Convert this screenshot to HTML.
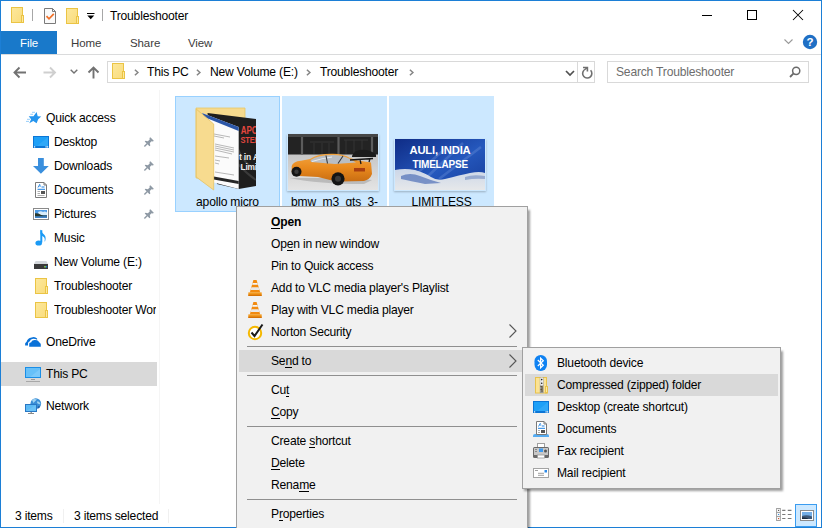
<!DOCTYPE html>
<html><head><meta charset="utf-8">
<style>
*{margin:0;padding:0;box-sizing:border-box}
html,body{width:822px;height:528px;overflow:hidden;background:#fff}
body{position:relative;font-family:"Liberation Sans",sans-serif;font-size:12.1px;color:#000;letter-spacing:-0.2px}
.a{position:absolute}
.t{position:absolute;white-space:nowrap;line-height:14px}
svg{position:absolute;overflow:visible}
u{text-decoration:none;border-bottom:1px solid currentColor;display:inline-block;line-height:11px}
</style></head><body>
<svg width="0" height="0" style="left:0;top:0">
  <defs>
    <linearGradient id="fy" x1="0" y1="0" x2="1" y2="1">
      <stop offset="0" stop-color="#fde89c"/><stop offset="1" stop-color="#f9dc7c"/>
    </linearGradient>
    <symbol id="fold" viewBox="0 0 14 17">
      <rect x="0.5" y="0.5" width="11" height="15" fill="url(#fy)" stroke="#ebc444"/>
      <rect x="10.5" y="8.5" width="2" height="7" fill="#fde9a0" stroke="#ebc444"/>
    </symbol>
  </defs>
</svg>
<!-- window border -->
<div class="a" style="left:0;top:0;width:822px;height:528px;border:1px solid #1c7fd6"></div>

<!-- title bar icons -->
<svg style="left:11px;top:7px" width="14" height="17" viewBox="0 0 14 17"><use href="#fold"/></svg>
<div class="a" style="left:32px;top:9px;width:1px;height:12px;background:#a7a7a7"></div>
<svg style="left:44px;top:8px" width="13" height="16" viewBox="0 0 13 16">
  <path d="M0.5 0.5H8.5L11.5 3.5V15.5H0.5Z" fill="#fafafa" stroke="#7a7a7a"/>
  <path d="M8.5 0.5V3.5H11.5" fill="none" stroke="#7a7a7a"/>
  <path d="M2.5 8.2L5 10.8L9.8 5.8" fill="none" stroke="#f07028" stroke-width="1.7"/>
</svg>
<svg style="left:66px;top:8px" width="14" height="17" viewBox="0 0 14 17"><use href="#fold"/></svg>
<svg style="left:87px;top:13px" width="8" height="7" viewBox="0 0 8 7">
  <path d="M0 0.5H7.5" stroke="#000" stroke-width="1"/>
  <path d="M0.3 2.5H7.2L3.75 6.2Z" fill="#000"/>
</svg>
<div class="a" style="left:102px;top:9px;width:1px;height:12px;background:#a7a7a7"></div>
<div class="t" style="left:110px;top:9px">Troubleshooter</div>
<!-- window controls -->
<div class="a" style="left:702px;top:15px;width:10px;height:1px;background:#000"></div>
<div class="a" style="left:747px;top:10px;width:10px;height:10px;border:1px solid #000"></div>
<svg style="left:793px;top:10px" width="10" height="10" viewBox="0 0 10 10">
  <path d="M0 0L10 10M10 0L0 10" stroke="#000" stroke-width="1.05"/>
</svg>

<!-- ribbon tabs -->
<div class="a" style="left:1px;top:31px;width:56px;height:23px;background:#1979ca"></div>
<div class="t" style="left:20px;top:36px;color:#fff;font-size:11.5px;letter-spacing:-0.1px">File</div>
<div class="t" style="left:71px;top:36px;color:#3c3c3c;font-size:11.5px;letter-spacing:-0.1px">Home</div>
<div class="t" style="left:130px;top:36px;color:#3c3c3c;font-size:11.5px;letter-spacing:-0.1px">Share</div>
<div class="t" style="left:188px;top:36px;color:#3c3c3c;font-size:11.5px;letter-spacing:-0.1px">View</div>
<svg style="left:784px;top:39px" width="9" height="6" viewBox="0 0 9 6">
  <path d="M0.5 0.5L4.5 4.5L8.5 0.5" fill="none" stroke="#9a9a9a" stroke-width="1.1"/>
</svg>
<svg style="left:802px;top:34px" width="16" height="16" viewBox="0 0 16 16">
  <circle cx="8" cy="8" r="7.2" fill="#1f6fc5"/>
  <text x="8" y="12.3" font-family="Liberation Sans" font-weight="bold" font-size="11.5" fill="#fff" text-anchor="middle">?</text>
</svg>
<div class="a" style="left:1px;top:54px;width:820px;height:1px;background:#dadbdc"></div>

<!-- nav buttons -->
<svg style="left:13px;top:66px" width="14" height="13" viewBox="0 0 14 13">
  <path d="M13 6.5H2M6.5 1.5L1.5 6.5L6.5 11.5" fill="none" stroke="#727272" stroke-width="1.9"/>
</svg>
<svg style="left:43px;top:66px" width="14" height="13" viewBox="0 0 14 13">
  <path d="M0.5 6.5H11.5M7 1.5L12 6.5L7 11.5" fill="none" stroke="#cfcfcf" stroke-width="1.9"/>
</svg>
<svg style="left:70px;top:69px" width="8" height="5" viewBox="0 0 8 5">
  <path d="M0.7 0.7L4 4L7.3 0.7" fill="none" stroke="#727272" stroke-width="1.4"/>
</svg>
<svg style="left:87px;top:66px" width="14" height="13" viewBox="0 0 14 13">
  <path d="M6.5 12.5V2M1.5 6.5L6.5 1.5L11.5 6.5" fill="none" stroke="#727272" stroke-width="1.9"/>
</svg>

<!-- address box -->
<div class="a" style="left:107px;top:61px;width:488px;height:22px;border:1px solid #d9d9d9"></div>
<div class="a" style="left:577px;top:62px;width:1px;height:20px;background:#d9d9d9"></div>
<svg style="left:112px;top:63px" width="14" height="17" viewBox="0 0 14 17"><use href="#fold"/></svg>
<svg style="left:134px;top:69px" width="5" height="7" viewBox="0 0 5 7"><path d="M0.9 0.8L3.9 3.5L0.9 6.2" fill="none" stroke="#858585" stroke-width="1.5"/></svg>
<div class="t" style="left:147px;top:65px">This PC</div>
<svg style="left:196px;top:69px" width="5" height="7" viewBox="0 0 5 7"><path d="M0.9 0.8L3.9 3.5L0.9 6.2" fill="none" stroke="#858585" stroke-width="1.5"/></svg>
<div class="t" style="left:210px;top:65px">New Volume (E:)</div>
<svg style="left:306px;top:69px" width="5" height="7" viewBox="0 0 5 7"><path d="M0.9 0.8L3.9 3.5L0.9 6.2" fill="none" stroke="#858585" stroke-width="1.5"/></svg>
<div class="t" style="left:320px;top:65px">Troubleshooter</div>
<svg style="left:409px;top:69px" width="5" height="7" viewBox="0 0 5 7"><path d="M0.9 0.8L3.9 3.5L0.9 6.2" fill="none" stroke="#858585" stroke-width="1.5"/></svg>
<svg style="left:565px;top:70px" width="10" height="7" viewBox="0 0 10 7">
  <path d="M1 1L5 5L9 1" fill="none" stroke="#505050" stroke-width="1.7"/>
</svg>
<svg style="left:578px;top:63px" width="18" height="18" viewBox="0 0 18 18">
  <path d="M12.6 7.3A4.6 4.6 0 1 1 6.2 7" fill="none" stroke="#6f6f6f" stroke-width="1.6"/>
  <path d="M6.2 7L9.2 4.6" fill="none" stroke="#6f6f6f" stroke-width="1.4"/>
  <path d="M5 4.5H9.4V8.6" fill="none" stroke="#6f6f6f" stroke-width="1.6"/>
</svg>

<!-- search box -->
<div class="a" style="left:607px;top:61px;width:202px;height:22px;border:1px solid #d9d9d9"></div>
<div class="t" style="left:616px;top:65px;color:#6d6d6d">Search Troubleshooter</div>
<svg style="left:789px;top:66px" width="12" height="12" viewBox="0 0 12 12">
  <circle cx="7.2" cy="4.8" r="3.6" fill="none" stroke="#6a6a6a" stroke-width="1.5"/>
  <path d="M4.6 7.4L1 11" stroke="#6a6a6a" stroke-width="1.8"/>
</svg>

<!-- nav pane -->
<div class="a" style="left:159px;top:90px;width:1px;height:414px;background:#f5f5f5"></div>
<div class="a" style="left:1px;top:362px;width:156px;height:24px;background:#d9d9d9"></div>

<svg style="left:22px;top:106px" width="24" height="22" viewBox="0 0 24 22">
  <path d="M14.6 6L15.7 10.3L19.2 10.4L16.2 13.3L14.6 17.2L11.3 14.9L7.3 17.2L9.1 13.3L6.7 10.2L11.5 10.3Z" fill="#2595ee"/>
  <path d="M10 6.3H13M8.3 8.3H11M5 13.3H8M4 15.4H7" stroke="#8ccaf8" stroke-width="0.9"/>
</svg>
<div class="t" style="left:46px;top:111px">Quick access</div>

<svg style="left:33px;top:136px" width="16" height="12" viewBox="0 0 16 12">
  <rect x="0" y="0" width="16" height="12" fill="#0b76d6"/>
  <rect x="1" y="1" width="14" height="9" fill="#1ea0f7"/>
  <path d="M4 10L15 1V10Z" fill="#3aaef8" opacity="0.6"/>
  <rect x="1" y="10.3" width="1.2" height="1.2" fill="#fff"/>
  <rect x="12.5" y="10.3" width="1.2" height="1.2" fill="#fff"/>
  <rect x="14" y="10.3" width="1.2" height="1.2" fill="#fff"/>
</svg>
<div class="t" style="left:54px;top:135px">Desktop</div>

<svg style="left:33px;top:158px" width="16" height="16" viewBox="0 0 16 16">
  <path d="M5 0H10.8V8H15.8L7.9 15.8L0 8H5Z" fill="#3a8fdd"/>
</svg>
<div class="t" style="left:54px;top:159px">Downloads</div>

<svg style="left:35px;top:182px" width="13" height="16" viewBox="0 0 13 16">
  <path d="M0.5 0.5H9L11.5 3V15.5H0.5Z" fill="#fff" stroke="#7a7a7a"/>
  <path d="M9 0.5V3H11.5" fill="none" stroke="#7a7a7a"/>
  <path d="M3 5.5L5 2M4.3 4H6" stroke="#1a7fe0" stroke-width="0.9" fill="none"/>
  <path d="M6.5 5H9.5M2.5 7.3H10" stroke="#1a7fe0" stroke-width="1"/>
  <path d="M2.5 9.5H5M2.5 11.5H5M2.5 13.5H9.5" stroke="#999" stroke-width="0.8"/>
  <rect x="6" y="9" width="4" height="3" fill="#555"/>
</svg>
<div class="t" style="left:54px;top:183px">Documents</div>

<svg style="left:33px;top:208px" width="16" height="12" viewBox="0 0 16 12">
  <rect x="0.5" y="0.5" width="15" height="11" fill="#fff" stroke="#8a8a8a"/>
  <rect x="2" y="2" width="12" height="8" fill="#4d9be6"/>
  <path d="M5 4Q8 2.5 10 4Q12 3 14 4.5V7H6Z" fill="#d8ecfa"/>
  <path d="M2 5.3Q4.5 4.8 6.5 6Q8 7 10.5 7.6H14V8.6H2Z" fill="#27392f"/>
  <rect x="2" y="8.6" width="12" height="1.4" fill="#3f83c9"/>
</svg>
<div class="t" style="left:54px;top:207px">Pictures</div>

<svg style="left:35px;top:229px" width="12" height="18" viewBox="0 0 12 18">
  <path d="M6.3 1.2V13.5" stroke="#1a9af5" stroke-width="2"/>
  <ellipse cx="3.7" cy="14" rx="3.3" ry="2.6" fill="#1a9af5"/>
  <path d="M5.5 0.5Q7 4 9.5 6Q11.5 8.5 10 12.5L9.5 12.3Q10.5 9 8 7.5Q6.5 6.5 5.5 5Z" fill="#1a9af5"/>
</svg>
<div class="t" style="left:54px;top:231px">Music</div>

<svg style="left:34px;top:261px" width="14" height="8" viewBox="0 0 13 8" preserveAspectRatio="none">
  <path d="M1.5 0H11.5L13 3H0Z" fill="#d4d8dc"/>
  <rect x="0" y="3" width="13" height="5" fill="#3a3a3a"/>
  <rect x="9.5" y="5" width="1.5" height="1.5" fill="#8ee04a"/>
  <rect x="11" y="5" width="1.2" height="1.5" fill="#1d6fd0"/>
</svg>
<div class="t" style="left:54px;top:255px">New Volume (E:)</div>

<svg style="left:35px;top:278px" width="14" height="17" viewBox="0 0 14 17"><use href="#fold"/></svg>
<div class="t" style="left:54px;top:279px">Troubleshooter</div>

<svg style="left:35px;top:302px" width="14" height="17" viewBox="0 0 14 17"><use href="#fold"/></svg>
<div class="a" style="left:54px;top:301px;width:102px;height:18px;overflow:hidden"><div class="t" style="left:0;top:2px">Troubleshooter Work</div></div>

<svg style="left:22px;top:332px" width="22" height="18" viewBox="0 0 22 18">
  <path d="M3.1 13.6Q2.5 11 4.6 9.8Q5.4 6.4 9.6 5.5Q12.8 4.2 15.1 6.6V7.7Q13 6.6 10.2 6.9Q8.2 7.4 7.9 9.3Q6.2 9.7 6 11.3V13.6Z" fill="#0a72d8"/>
  <path d="M7.2 14.7V11.8Q7.4 10.7 8.6 10.6Q9.2 10.5 9.4 9.7Q10 8 12.6 7.9Q15.5 7.8 16.4 9.3Q17 10.2 17.7 10.8Q18.8 11.4 18.8 12.6V14.7Z" fill="#0a72d8"/>
</svg>
<div class="t" style="left:46px;top:335px">OneDrive</div>

<svg style="left:25px;top:366px" width="16" height="17" viewBox="0 0 16 17">
  <rect x="0" y="1" width="16" height="11" fill="#1a8ee6"/>
  <rect x="1" y="2" width="14" height="9" fill="#67c0f8"/>
  <path d="M5 11L15 3V11Z" fill="#8fd2fb" opacity="0.5"/>
  <path d="M6 13.5H10" stroke="#9a9a9a" stroke-width="1"/>
  <path d="M1 15.5H15" stroke="#a8a8a8" stroke-width="1"/>
</svg>
<div class="t" style="left:46px;top:367px">This PC</div>

<svg style="left:22px;top:394px" width="22" height="22" viewBox="0 0 22 22">
  <circle cx="13.8" cy="9.6" r="5.3" fill="#3a8ed6"/>
  <path d="M10 6Q12 4.5 15 5.5Q13 7 11.5 9ZM15.5 7Q18 8 18.6 10Q16.5 10.5 15 9Z" fill="#9fd3f2"/>
  <path d="M16 12Q17.5 13 18 11.5V13Q17 14.5 15.5 14.5Z" fill="#1e5fa8"/>
  <rect x="3.5" y="10.5" width="11" height="7" fill="#5cbaf5" stroke="#2877c4" stroke-width="1"/>
  <path d="M4 17L14 11V17Z" fill="#7ccaf8" opacity="0.5"/>
  <rect x="8.5" y="18" width="1.5" height="1" fill="#999"/>
  <rect x="6" y="19" width="6" height="1" fill="#8a8a8a"/>
</svg>
<div class="t" style="left:46px;top:399px">Network</div>

<!-- pins -->
<svg style="left:144px;top:137px" width="10" height="10" viewBox="0 0 10 10"><path d="M6.3 0.2L9.8 3.7L9 4.5L7.6 4.3L5.8 6.1L6.3 8.5L5.5 9.3L0.7 4.5L1.5 3.7L3.9 4.2L5.7 2.4L5.5 1Z" fill="#8f9aa5"/><path d="M3.4 6.6L0.4 9.6" stroke="#8f9aa5" stroke-width="1.4"/></svg>
<svg style="left:144px;top:161px" width="10" height="10" viewBox="0 0 10 10"><path d="M6.3 0.2L9.8 3.7L9 4.5L7.6 4.3L5.8 6.1L6.3 8.5L5.5 9.3L0.7 4.5L1.5 3.7L3.9 4.2L5.7 2.4L5.5 1Z" fill="#8f9aa5"/><path d="M3.4 6.6L0.4 9.6" stroke="#8f9aa5" stroke-width="1.4"/></svg>
<svg style="left:144px;top:185px" width="10" height="10" viewBox="0 0 10 10"><path d="M6.3 0.2L9.8 3.7L9 4.5L7.6 4.3L5.8 6.1L6.3 8.5L5.5 9.3L0.7 4.5L1.5 3.7L3.9 4.2L5.7 2.4L5.5 1Z" fill="#8f9aa5"/><path d="M3.4 6.6L0.4 9.6" stroke="#8f9aa5" stroke-width="1.4"/></svg>
<svg style="left:144px;top:209px" width="10" height="10" viewBox="0 0 10 10"><path d="M6.3 0.2L9.8 3.7L9 4.5L7.6 4.3L5.8 6.1L6.3 8.5L5.5 9.3L0.7 4.5L1.5 3.7L3.9 4.2L5.7 2.4L5.5 1Z" fill="#8f9aa5"/><path d="M3.4 6.6L0.4 9.6" stroke="#8f9aa5" stroke-width="1.4"/></svg>

<!-- content tiles -->
<div class="a" style="left:175px;top:96px;width:105px;height:116px;background:#cce8ff;border:1px solid #99d1ff"></div>
<div class="a" style="left:282px;top:96px;width:105px;height:115px;background:#cce8ff"></div>
<div class="a" style="left:389px;top:96px;width:105px;height:115px;background:#cce8ff"></div>

<!-- apollo folder thumbnail -->
<svg style="left:192px;top:104px" width="66" height="88" viewBox="0 0 66 88">
  <defs><clipPath id="bd"><path d="M15.5 9L64 15V82L46.7 85V9Z"/></clipPath></defs>
  <path d="M4 4H53V74H4Z" fill="#f6da8e" stroke="#e8c664" stroke-width="0.8"/>
  <path d="M15.5 9L64 15V82L46.7 85L25 80Z" fill="#1e1e1e"/>
  <g clip-path="url(#bd)">
    <path d="M46 45Q52 60 64 66M46 60Q55 70 64 76" stroke="#3a3a3a" stroke-width="2" fill="none"/>
    <text x="48.8" y="30.2" textLength="17" lengthAdjust="spacingAndGlyphs" font-family="Liberation Sans" font-weight="bold" font-size="10.5" fill="#e4473e">APO</text>
    <text x="48.5" y="39" textLength="20" lengthAdjust="spacingAndGlyphs" font-family="Liberation Sans" font-weight="bold" font-size="9.5" fill="#e4473e">STEM</text>
    <text x="47" y="55.7" textLength="20" lengthAdjust="spacingAndGlyphs" font-family="Liberation Sans" font-weight="bold" font-size="9.5" fill="#ececec">t in A</text>
    <text x="48.5" y="66" textLength="19" lengthAdjust="spacingAndGlyphs" font-family="Liberation Sans" font-weight="bold" font-size="9.5" fill="#ececec">Limit</text>
  </g>
  <path d="M10 9L46.7 23V85L20 78Z" fill="#fbfbfb"/>
  <path d="M10 9L46.7 23V27L12 13Z" fill="#2b56a8"/>
  <path d="M22 30L38 33M22 32L32 34M23 40L42 44M23 42L42 46M23 44L42 48M23 46L40 50M23 52L37 54M23 56L28 57M23 59L27 60M23 68L42 71" stroke="#8a8a8a" stroke-width="0.6"/>
  <path d="M21.7 72.5L46.7 77V80L21.7 75.5Z" fill="#262626"/>
  <path d="M4.2 5L21.7 20V86L4.2 73Z" fill="#f7db8f" stroke="#e6c262" stroke-width="0.8"/>
</svg>
<div class="t" style="left:175px;top:195px;width:105px;text-align:center">apollo micro</div>

<!-- bmw thumbnail -->
<div class="a" style="left:287px;top:134px;width:92px;height:57px;box-shadow:0 1px 2px rgba(0,0,0,0.25)"></div>
<svg style="left:288px;top:134px" width="90" height="56" viewBox="0 0 90 56">
  <defs>
    <linearGradient id="gnd" x1="0" y1="0" x2="0" y2="1">
      <stop offset="0" stop-color="#b4b4b4"/><stop offset="1" stop-color="#e4e4e4"/>
    </linearGradient>
    <linearGradient id="body" x1="0" y1="0" x2="0" y2="1">
      <stop offset="0" stop-color="#f2a541"/><stop offset="0.5" stop-color="#e98a1e"/><stop offset="1" stop-color="#c96d12"/>
    </linearGradient>
  </defs>
  <rect x="0" y="0" width="90" height="56" fill="url(#gnd)"/>
  <rect x="0" y="0" width="90" height="20.5" fill="#232323"/>
  <rect x="0" y="0" width="90" height="3" fill="#474747"/>
  <path d="M14 3V20.5M50.5 3V20.5M84 3V20.5" stroke="#5c5c5c" stroke-width="2.2"/>
  <path d="M22 8H46M56 6H80" stroke="#3a3a3a" stroke-width="0.8"/>
  <path d="M26 9V20M34 9V20M41 9V20M58 6V20M66 6V20M74 6V20" stroke="#383838" stroke-width="0.8"/>
  <path d="M64 22Q66 16 74 15.8Q83 16 88 20.5V23H64Z" fill="#1b1b1b"/>
  <path d="M2 44Q30 50 76 50L84 46L60 44Z" fill="#9a9a9a" opacity="0.5"/>
  <path d="M3.7 32Q5 27.5 13 26.8L22 25Q30 19.5 45 19.8Q56 20 62 24L70 26.5L83 28.5L84 40Q82 45.5 76 47L52 47.5Q40 46 30 43L12 42Q5 41.5 3.7 38Z" fill="url(#body)"/>
  <path d="M22.5 26Q30 21 45 21Q55 21 61.5 24.8L68 28.5L47 30L23 28Z" fill="#b9bec4"/>
  <path d="M24 27.5Q35 24 44 23" stroke="#e8ecef" stroke-width="1.2" fill="none"/>
  <path d="M38 21.5L39.5 29.5M55 22L50 29.5" stroke="#3a3a3a" stroke-width="1.1"/>
  <path d="M62 26L85 24.5M72 25.3L73 30M82 24.8L81 28" fill="none" stroke="#161616" stroke-width="1.3"/>
  <path d="M66 34H77V37.5H66Z" fill="#a83e10"/>
  <circle cx="8.5" cy="37.8" r="5" fill="#141414"/>
  <circle cx="8.5" cy="37.8" r="2.2" fill="#3a3a3a"/>
  <circle cx="50" cy="44.8" r="6.6" fill="#141414"/>
  <circle cx="50" cy="44.8" r="3" fill="#3a3a3a"/>
</svg>
<div class="t" style="left:282px;top:195px;width:105px;text-align:center">bmw_m3_gts_3-</div>

<!-- auli thumbnail -->
<div class="a" style="left:394px;top:139px;width:92px;height:52px;box-shadow:0 1px 2px rgba(0,0,0,0.25)"></div>
<svg style="left:395px;top:139px" width="90" height="51" viewBox="0 0 90 51">
  <defs>
    <linearGradient id="sky" x1="0" y1="0" x2="1" y2="1">
      <stop offset="0" stop-color="#0f2c86"/><stop offset="0.55" stop-color="#2558bd"/><stop offset="1" stop-color="#163c9a"/>
    </linearGradient>
    <linearGradient id="snow" x1="0" y1="0" x2="0" y2="1">
      <stop offset="0" stop-color="#cbd6e8"/><stop offset="1" stop-color="#e6e8ea"/>
    </linearGradient>
  </defs>
  <rect x="0" y="0" width="90" height="51" fill="url(#sky)"/>
  <path d="M32 38L68 4M44 40L86 8M20 36L50 10" stroke="#6f95dc" stroke-width="2.5" opacity="0.35"/>
  <path d="M0 31Q10 29 20 31Q30 34 36 38Q42 42 50 40Q65 36 75 34Q85 32 90 34V51H0Z" fill="url(#snow)"/>
  <path d="M6 37Q15 33 25 37Q35 41 46 44L30 45Q15 42 6 40Z" fill="#4f6fb6" opacity="0.7"/>
  <path d="M70 38Q78 35 90 37V40Q80 39 70 41Z" fill="#5877b8" opacity="0.5"/>
  <text x="14.5" y="15" textLength="61" lengthAdjust="spacingAndGlyphs" font-family="Liberation Sans" font-weight="bold" font-size="11.5" fill="#fff">AULI, INDIA</text>
  <text x="17.5" y="29" textLength="55.5" lengthAdjust="spacingAndGlyphs" font-family="Liberation Sans" font-weight="bold" font-size="11.5" fill="#fff">TIMELAPSE</text>
</svg>
<div class="t" style="left:389px;top:195px;width:105px;text-align:center">LIMITLESS</div>

<!-- status bar -->
<div class="t" style="left:15px;top:509px">3 items</div>
<div class="a" style="left:63px;top:509px;width:1px;height:14px;background:#f0f0f0"></div>
<div class="t" style="left:74px;top:509px">3 items selected</div>
<div class="a" style="left:168px;top:509px;width:1px;height:14px;background:#f0f0f0"></div>

<!-- view buttons -->
<svg style="left:776px;top:508px" width="17" height="13" viewBox="0 0 18 14">
  <rect x="0.5" y="0.5" width="4" height="13" fill="#fff" stroke="#9a9a9a" stroke-width="1"/>
  <path d="M0.5 4.8H4.5M0.5 9.2H4.5" stroke="#9a9a9a" stroke-width="1"/>
  <rect x="2" y="2" width="1.2" height="1.2" fill="#555"/>
  <rect x="2" y="6.4" width="1.2" height="1.2" fill="#3a8fe0"/>
  <rect x="2" y="10.8" width="1.2" height="1.2" fill="#d0502a"/>
  <path d="M6.5 2.5H10M12.5 2.5H16.5M6.5 7H10M12.5 7H16.5M6.5 11.3H10M12.5 11.3H16.5" stroke="#7a7a7a" stroke-width="1.2"/>
</svg>
<div class="a" style="left:795px;top:504px;width:22px;height:23px;background:#cce8ff;border:1px solid #3a9cf0"></div>
<svg style="left:800px;top:510px" width="14" height="11" viewBox="0 0 14 11">
  <rect x="0.5" y="0.5" width="13" height="10" fill="#fff" stroke="#8a8a8a"/>
  <rect x="2" y="2" width="10" height="7" fill="#74aee6"/>
  <path d="M2 6Q7 4.5 12 6.5V9H2Z" fill="#3e5877"/>
  <path d="M2 7.5Q5 7 8 8.5V9H2Z" fill="#1c2b3c"/>
</svg>


<!-- context menu -->
<div class="a" style="left:238px;top:210px;width:292px;height:330px;background:rgba(0,0,0,0.38);filter:blur(1.1px)"></div>
<div class="a" style="left:236px;top:206px;width:292px;height:330px;background:#f1f1f1;border:1px solid #a0a0a0"></div>
<div class="t" style="left:271px;top:215px;font-weight:bold"><u>O</u>pen</div>
<div class="t" style="left:271px;top:237px">Op<u>e</u>n in new window</div>
<div class="t" style="left:271px;top:259px">Pin to Quick access</div>
<svg style="left:248px;top:280px" width="14" height="16" viewBox="0 0 14 16"><path d="M5.4 0H8.6L12.2 12.6H1.8Z" fill="#f28b10"/><path d="M4.6 3H9.4L9.9 4.8H4.1Z" fill="#f4f4f4"/><path d="M3.4 7.2H10.6L11.4 10H2.6Z" fill="#e9e9e9"/><path d="M0.3 12.4H13.7V15.9H0.3Z" fill="#f39a1e"/><path d="M0.3 14.6H13.7V15.9H0.3Z" fill="#d26d00"/></svg>
<div class="t" style="left:271px;top:281px">Add to VLC media player's Playlist</div>
<svg style="left:248px;top:302px" width="14" height="16" viewBox="0 0 14 16"><path d="M5.4 0H8.6L12.2 12.6H1.8Z" fill="#f28b10"/><path d="M4.6 3H9.4L9.9 4.8H4.1Z" fill="#f4f4f4"/><path d="M3.4 7.2H10.6L11.4 10H2.6Z" fill="#e9e9e9"/><path d="M0.3 12.4H13.7V15.9H0.3Z" fill="#f39a1e"/><path d="M0.3 14.6H13.7V15.9H0.3Z" fill="#d26d00"/></svg>
<div class="t" style="left:271px;top:303px">Play with VLC media player</div>
<svg style="left:247px;top:323px" width="17" height="18" viewBox="0 0 17 18">
  <circle cx="8" cy="10" r="6.2" fill="#fff" stroke="#f5b800" stroke-width="2"/>
  <path d="M4.5 9.5L7.5 13L15.5 1.5" fill="none" stroke="#1a1a1a" stroke-width="2"/>
</svg>
<div class="t" style="left:271px;top:325px">Norton Security</div>
<svg style="left:509px;top:324px" width="8" height="14" viewBox="0 0 8 14"><path d="M0.5 0.5L7 7L0.5 13.5" fill="none" stroke="#555" stroke-width="1.1"/></svg>
<div class="a" style="left:247px;top:346px;width:270px;height:1px;background:#8f8f8f"></div>
<div class="a" style="left:239px;top:350px;width:289px;height:22px;background:#d9d9d9"></div>
<div class="t" style="left:271px;top:354px">Se<u>n</u>d to</div>
<svg style="left:509px;top:354px" width="8" height="14" viewBox="0 0 8 14"><path d="M0.5 0.5L7 7L0.5 13.5" fill="none" stroke="#555" stroke-width="1.1"/></svg>
<div class="a" style="left:247px;top:375px;width:270px;height:1px;background:#8f8f8f"></div>
<div class="t" style="left:271px;top:383px">Cu<u>t</u></div>
<div class="t" style="left:271px;top:405px"><u>C</u>opy</div>
<div class="a" style="left:247px;top:426px;width:270px;height:1px;background:#8f8f8f"></div>
<div class="t" style="left:271px;top:434px">Create <u>s</u>hortcut</div>
<div class="t" style="left:271px;top:456px"><u>D</u>elete</div>
<div class="t" style="left:271px;top:478px">Rena<u>m</u>e</div>
<div class="a" style="left:247px;top:499px;width:270px;height:1px;background:#8f8f8f"></div>
<div class="t" style="left:271px;top:507px">P<u>r</u>operties</div>

<!-- submenu -->
<div class="a" style="left:524px;top:351px;width:259px;height:140px;background:rgba(0,0,0,0.38);filter:blur(1.1px)"></div>
<div class="a" style="left:522px;top:347px;width:259px;height:142px;background:#f1f1f1;border:1px solid #a0a0a0"></div>
<div class="a" style="left:525px;top:374px;width:253px;height:22px;background:#d9d9d9"></div>
<svg style="left:534px;top:355px" width="14" height="16" viewBox="0 0 14 16">
  <rect x="0.5" y="0" width="12.5" height="16" rx="6.2" fill="#0f82f2"/>
  <path d="M3.8 5L9.3 10.3L6.6 12.8V3.2L9.3 5.7L3.8 11" fill="none" stroke="#fff" stroke-width="1.2"/>
</svg>
<div class="t" style="left:557px;top:356px">Bluetooth device</div>
<svg style="left:535px;top:377px" width="13" height="17" viewBox="0 0 13 17">
  <rect x="0.5" y="0.5" width="11" height="15.5" fill="#fbe394" stroke="#e8c24c"/>
  <rect x="4.8" y="0.5" width="3.8" height="15.5" fill="#9a9a9a"/>
  <rect x="5.2" y="0.5" width="3" height="8" rx="1" fill="#eeeeee"/>
  <circle cx="6.7" cy="2.6" r="0.8" fill="#222"/>
  <circle cx="6.7" cy="6.3" r="0.8" fill="#222"/>
  <path d="M5.5 9.5H7.5M6 11H8M5.5 12.5H7.5M6 14H8" stroke="#5a4a2a" stroke-width="0.9"/>
  <rect x="10.5" y="9.5" width="2" height="6.5" fill="#fde9a0" stroke="#e8c24c"/>
</svg>
<div class="t" style="left:557px;top:378px">Compressed (zipped) folder</div>
<svg style="left:533px;top:401px" width="16" height="12" viewBox="0 0 16 12">
  <rect x="0" y="0" width="16" height="12" fill="#0b76d6"/>
  <rect x="1" y="1" width="14" height="9" fill="#1ea0f7"/>
  <path d="M4 10L15 1V10Z" fill="#3aaef8" opacity="0.6"/>
  <rect x="1" y="10.3" width="1.2" height="1.2" fill="#fff"/>
  <rect x="12.5" y="10.3" width="1.2" height="1.2" fill="#fff"/>
  <rect x="14" y="10.3" width="1.2" height="1.2" fill="#fff"/>
</svg>
<div class="t" style="left:557px;top:400px">Desktop (create shortcut)</div>
<svg style="left:533px;top:421px" width="16" height="16" viewBox="0 0 16 16">
  <path d="M0 14.5Q0 13 2 13H14Q16 13 16 14.5V16H0Z" fill="#55acf2"/>
  <path d="M3.5 0.5H11L13.5 3V13.5H3.5Z" fill="#fff" stroke="#7a7a7a"/>
  <path d="M11 0.5V3H13.5" fill="none" stroke="#7a7a7a"/>
  <path d="M5.5 5.5L7.5 2M6.8 4H8.3" stroke="#1a7fe0" stroke-width="0.9" fill="none"/>
  <path d="M8.8 5H11.5M5 7.3H12" stroke="#1a7fe0" stroke-width="1"/>
  <path d="M5 9.5H7M5 11.5H7" stroke="#999" stroke-width="0.8"/>
  <rect x="8" y="9" width="4" height="3" fill="#555"/>
</svg>
<div class="t" style="left:557px;top:422px">Documents</div>
<svg style="left:533px;top:443px" width="16" height="16" viewBox="0 0 16 16">
  <rect x="4.5" y="0.5" width="7" height="4" fill="#fff" stroke="#a0a0a0"/>
  <rect x="0" y="4" width="16" height="11" rx="1.5" fill="#6a6a6a"/>
  <rect x="1" y="5" width="14" height="7" fill="#c8c8c8"/>
  <rect x="6" y="5.5" width="4" height="3.5" fill="#3d9af0"/>
  <circle cx="12.5" cy="8" r="1.5" fill="#555"/>
  <path d="M2 6.5H4M2 8.5H4" stroke="#777" stroke-width="0.8"/>
  <rect x="4.5" y="12" width="7" height="3" fill="#fff" stroke="#999" stroke-width="0.8"/>
</svg>
<div class="t" style="left:557px;top:444px">Fax recipient</div>
<svg style="left:533px;top:468px" width="16" height="10" viewBox="0 0 16 10">
  <rect x="0.5" y="0.5" width="15" height="9" fill="#fff" stroke="#a3a3a3"/>
  <rect x="11.5" y="2" width="2.5" height="2.5" fill="#2d8ae8"/>
  <path d="M2 2.5H5M5 5.3H11M5 7.3H11" stroke="#888" stroke-width="0.8"/>
</svg>
<div class="t" style="left:557px;top:466px">Mail recipient</div>

</body></html>
